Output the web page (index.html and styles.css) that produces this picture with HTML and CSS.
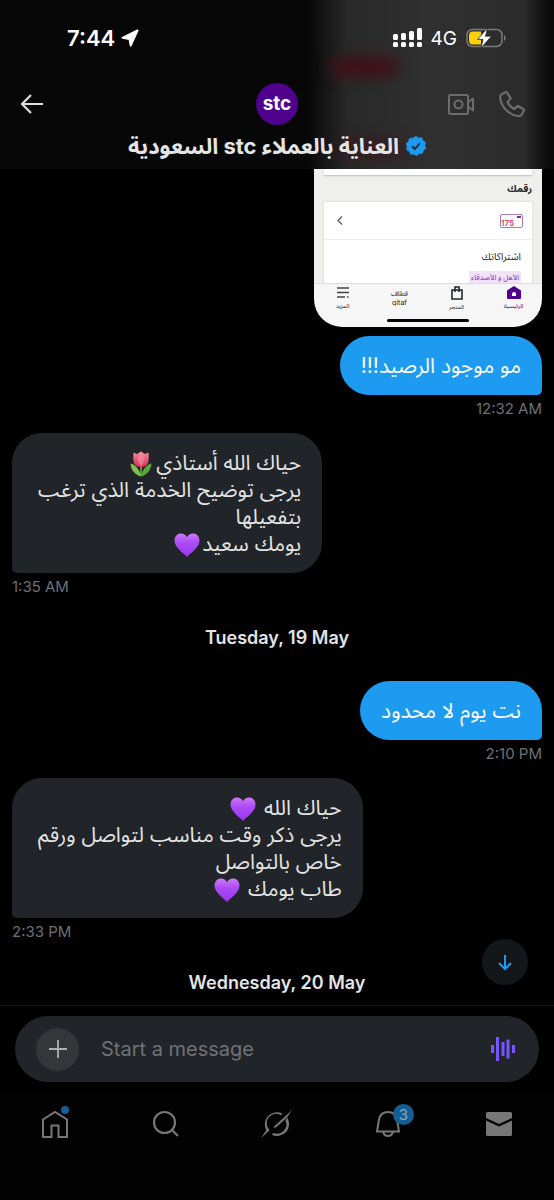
FILE: index.html
```html
<!DOCTYPE html>
<html lang="en">
<head>
<meta charset="utf-8">
<meta name="viewport" content="width=device-width, initial-scale=1">
<title>Messages</title>
<link rel="stylesheet" href="styles.css">
</head>
<body>
<svg class="defs" aria-hidden="true">
  <defs>
    <linearGradient id="heartFill" x1="0" y1="0" x2="0" y2="1"><stop offset="0" stop-color="#cf79f6"/><stop offset=".4" stop-color="#ac4cf5"/><stop offset="1" stop-color="#9a36ee"/></linearGradient>
    <linearGradient id="petal" x1="0" y1="0" x2="0" y2="1"><stop offset="0" stop-color="#f38aa0"/><stop offset="1" stop-color="#d92f55"/></linearGradient>
    <symbol id="heart" viewBox="0 0 26 26"><path fill="url(#heartFill)" d="M13 25C9 20.500.5 15.500.5 8.500.5 4.200 3.500 1.500 7 1.500c2.700 0 4.900 1.500 6 3.800 1.100-2.300 3.300-3.800 6-3.800 3.500 0 6.500 2.700 6.500 7C25.500 15.500 17 20.500 13 25z"/></symbol>
  </defs>
</svg>
<div class="app">
  <header class="top">
    <div class="glow" aria-hidden="true"><i class="spot spot-a"></i><i class="spot spot-b"></i></div>
    <div class="status">
      <div class="clock">7:44
        <svg width="18" height="18" viewBox="0 0 18 18" aria-hidden="true"><path fill="#fff" stroke="#fff" stroke-width="2" stroke-linejoin="round" d="M16.500 1.500 1.500 8.800l7 1.200 1.200 6.500z"/></svg>
      </div>
      <div class="signals">
        <svg width="29" height="20" viewBox="0 0 29 20" fill="#fff" aria-hidden="true"><rect x="0" y="6" width="5" height="6" rx="1.500"/><rect x="8" y="5" width="5" height="7" rx="1.500"/><rect x="16" y="3" width="5" height="9" rx="1.500"/><rect x="24" y="0" width="5" height="12" rx="1.500"/><rect x="0" y="14" width="5" height="5" rx="1.500"/><rect x="8" y="14" width="5" height="5" rx="1.500"/><rect x="16" y="14" width="5" height="5" rx="1.500"/><rect x="24" y="14" width="5" height="5" rx="1.500"/></svg>
        <span>4G</span>
        <svg width="40" height="20" viewBox="0 0 40 20" aria-hidden="true"><rect x="1" y="1.500" width="35" height="17" rx="5.500" fill="none" stroke="#7b7b7b" stroke-width="1.500"/><path d="M38 7c2 1 2 5 0 6z" fill="#7b7b7b"/><path d="M7 3.500h8v13H7a4 4 0 0 1-4-4v-5a4 4 0 0 1 4-4z" fill="#fbd10a"/><path d="M21.500 0 11.500 11.500h5.500L15 20 25.500 8.200h-6z" fill="#fff" stroke="#2b2b2b" stroke-width=".8" stroke-linejoin="round"/></svg>
      </div>
    </div>
    <div class="bar">
      <button class="plain back" aria-label="Back"><svg width="24" height="22" viewBox="0 0 24 22" fill="none" stroke="#e0e0e0" stroke-width="2.200"><path d="M23 11H2M11 2l-9 9 9 9"/></svg></button>
      <div class="avatar" role="img" aria-label="stc"><span>stc</span></div>
      <div class="calls">
        <button class="plain" aria-label="Video call"><svg width="28" height="24" viewBox="0 0 28 24" fill="none" stroke="#6c6c6c" stroke-width="2"><rect x="2" y="3" width="19" height="19" rx="1.500"/><circle cx="11.500" cy="12.500" r="4"/><path d="M21 10.500l5-4v12l-5-4" stroke-linejoin="round"/></svg></button>
        <button class="plain" aria-label="Call"><svg width="28" height="28" viewBox="0 0 28 28" fill="none" stroke="#6c6c6c" stroke-width="2.200" stroke-linejoin="round"><path d="M8.500 1.800 3.600 4.200C2.200 5 2 6.700 2.200 8.300 3.500 17 11 24.800 19.800 26c1.700.2 3.300-.2 4-1.600l2.400-4.700-6.400-4-3.600 3.400c-3-1.500-5.400-4-6.700-6.900l3.200-3.800z"/></svg></button>
      </div>
    </div>
    <h1 class="title" dir="rtl">
      <svg width="20" height="20" viewBox="0 0 20 20" role="img" aria-label="Verified"><path fill="#1d9bf0" d="M10 .3 12.600 1.900 15.700 1.800 17 4.600 19.500 6.500 18.900 9.500 19.800 12.500 17.400 14.500 16.300 17.400 13.200 17.700 10.600 19.600 7.800 18.200 4.700 18.200 3.300 15.400.7 13.700 1.100 10.600.2 7.600 2.500 5.500 3.500 2.500 6.600 2.200z" stroke="#1d9bf0" stroke-width=".6" stroke-linejoin="round"/><path d="M6 10.200l2.800 2.800L14 7.200" fill="none" stroke="#26313a" stroke-width="2"/></svg>
      <span>العناية بالعملاء stc السعودية</span>
    </h1>
  </header>

  <main class="thread">
    <figure class="shot" dir="rtl">
      <div class="shot-body">
        <div class="sheet-end"></div>
        <div class="shot-label">رقمك</div>
        <div class="sheet">
          <div class="sheet-row">
            <div class="sim"><b>175</b><i></i></div>
            <svg width="6" height="9" viewBox="0 0 6 9" fill="none" stroke="#555" stroke-width="1.200" aria-hidden="true"><path d="M5 .5 1 4.500l4 4"/></svg>
          </div>
          <div class="sheet-subs"><div>اشتراكاتك</div><span class="chip">الأهل و الأصدقاء</span></div>
        </div>
      </div>
      <div class="shot-tabs">
        <div class="tab on"><svg width="14" height="13" viewBox="0 0 14 13"><path fill="#4f008c" d="M7 0l7 4.500V12a1 1 0 0 1-1 1H1a1 1 0 0 1-1-1V4.500z"/><path fill="#fff" d="M5 10V8a2 2 0 0 1 4 0v2z"/></svg>الرئيسية</div>
        <div class="tab"><svg width="12" height="14" viewBox="0 0 12 14" fill="none" stroke="#25252e" stroke-width="1.600"><path d="M1 4h10v9H1zM4 6V1h4v5"/></svg>المتجر</div>
        <div class="tab brand"><span>قطاف</span><span>qitaf</span></div>
        <div class="tab"><svg width="12" height="13" viewBox="0 0 12 13" fill="none" stroke="#444" stroke-width="1.300"><path d="M0 2h12M0 6.500h12M0 11h8M10 11h1.500"/></svg>المزيد</div>
      </div>
      <div class="home-bar"></div>
    </figure>

    <div class="msg mine"><p class="bubble" dir="rtl">مو موجود الرصيد!!!</p><time>12:32 AM</time></div>

    <div class="msg theirs"><p class="bubble" dir="rtl">حياك الله أستاذي<svg class="emoji" viewBox="0 0 26 26" role="img" aria-label="Tulip"><path d="M12 12h2v13h-2z" fill="#4f9a35"/><path fill="#7fc04a" d="M13 25.500C11.500 17.500 7 13.500 2.500 12.500c.5 6.500 4 11 10.500 13z"/><path fill="#5da63c" d="M13 25.500c1.500-8 6-12 10.500-13-.5 6.500-4 11-10.500 13z"/><path fill="url(#petal)" d="M5.500 1.500 9 3l4-2.500L17 3l3.500-1.500C21 8 21.500 16 13 16S5 8 5.500 1.500z"/><path fill="#f590a6" d="M13 .5c4 4 4 10 0 15-4-5-4-11 0-15z" opacity=".65"/></svg><br>يرجى توضيح الخدمة الذي ترغب<br>بتفعيلها<br>يومك سعيد<svg class="emoji" role="img" aria-label="Purple heart"><use href="#heart"/></svg></p><time>1:35 AM</time></div>

    <h2 class="day">Tuesday, 19 May</h2>

    <div class="msg mine"><p class="bubble" dir="rtl">نت يوم لا محدود</p><time>2:10 PM</time></div>

    <div class="msg theirs"><p class="bubble" dir="rtl">حياك الله <svg class="emoji" role="img" aria-label="Purple heart"><use href="#heart"/></svg><br>يرجى ذكر وقت مناسب لتواصل ورقم<br>خاص بالتواصل<br>طاب يومك <svg class="emoji" role="img" aria-label="Purple heart"><use href="#heart"/></svg></p><time>2:33 PM</time></div>

    <h2 class="day last">Wednesday, 20 May</h2>
    <button class="jump" aria-label="Scroll to latest"><svg width="14" height="17" viewBox="0 0 14 17" fill="none" stroke="#1d9bf0" stroke-width="2"><path d="M7 1v14M1 9l6 6 6-6"/></svg></button>
  </main>

  <form class="composer">
    <div class="field">
      <button type="button" class="plus" aria-label="Add attachment"><svg width="18" height="18" viewBox="0 0 18 18" stroke="#aeb0b2" stroke-width="1.800"><path d="M9 0v18M0 9h18"/></svg></button>
      <input type="text" placeholder="Start a message" aria-label="Start a message">
      <button type="button" class="plain" aria-label="Voice message"><svg width="24" height="24" viewBox="0 0 24 24" fill="#7856ff"><rect x="0" y="8" width="3" height="8"/><rect x="5" y="0" width="3" height="24"/><rect x="10.500" y="5" width="3" height="14"/><rect x="15.500" y="2.500" width="3" height="19"/><rect x="21" y="8" width="3" height="8"/></svg></button>
    </div>
  </form>

  <nav class="nav" aria-label="Main">
    <a href="#" aria-label="Home"><svg width="28" height="28" viewBox="0 0 28 28" fill="none" stroke="#777" stroke-width="2"><path d="M2 9.500 14 2l12 7.500V27h-8.500V15.500h-7V27H2z"/></svg><i class="dot"></i></a>
    <a href="#" aria-label="Search"><svg width="28" height="28" viewBox="0 0 28 28" fill="none" stroke="#777" stroke-width="2.200"><circle cx="12.500" cy="12.500" r="10.500"/><path d="M20 20l6 6"/></svg></a>
    <a href="#" aria-label="Grok"><svg width="32" height="30" viewBox="0 0 32 30"><path fill="#777" d="M21.500 4.700A12 12 0 0 0 6.200 22.500l2-2A9.300 9.300 0 0 1 19.800 6.200z"/><path fill="#777" d="M26.200 8.500a12 12 0 0 1-15.500 17.200l1.900-1.700A9.300 9.300 0 0 0 24.500 11.500z"/><path fill="#777" d="M12 18.500 31 1 26 8.500 15 18.500zM0 29l6.500-9.500 2 2z"/></svg></a>
    <a href="#" aria-label="Notifications, 3 new"><svg width="26" height="28" viewBox="0 0 26 28" fill="none" stroke="#777" stroke-width="2"><path d="M2 21.500 4 9.500C5 4.500 8.500 2 13 2s8 2.500 9 7.500l2 12zM8 21.500c.7 3 2.500 4.500 5 4.500s4.300-1.500 5-4.500"/></svg><span class="badge">3</span></a>
    <a href="#" aria-label="Messages"><svg width="26" height="24" viewBox="0 0 26 24" fill="#777"><path d="M1.500 0h23A1.500 1.500 0 0 1 26 1.500V6l-13 6L0 6V1.500A1.500 1.500 0 0 1 1.500 0z"/><path d="M0 8.500l13 6 13-6v14a1.500 1.500 0 0 1-1.500 1.500h-23A1.500 1.500 0 0 1 0 22.500z"/></svg></a>
  </nav>
</div>
</body>
</html>
```
FILE: styles.css
```css
* { box-sizing: border-box; }
body {
  margin: 0;
  background: #000;
  color: #e3e4e5;
  font-family: Inter, "Noto Sans Arabic", "DejaVu Sans", sans-serif;
}
.defs { position: absolute; width: 0; height: 0; }
button { border: 0; padding: 0; cursor: pointer; font: inherit; }
svg { display: block; flex: none; }
.plain { background: none; }
.app { min-height: 100vh; display: flex; flex-direction: column; }

.top { position: relative; padding: 24px 20px 9px; background: #070707; overflow: hidden; }
.top > * { position: relative; }
.top .glow {
  position: absolute;
  inset: -20px 0 -20px auto;
  width: 246px;
  background: linear-gradient(90deg, #070707, #292929 16%, #303030 50%, #2b2b2b 88%, #0a0a0a 98%);
}
.spot { position: absolute; width: 68px; height: 20px; border-radius: 10px; background: #401018; filter: blur(7px); }
.spot-a { left: 22px; top: 77px; }
.spot-b { left: 30px; top: 158px; opacity: .6; }
.status { display: flex; justify-content: space-between; align-items: center; height: 28px; padding: 0 28px 0 47px; }
.clock { display: flex; align-items: center; gap: 6px; color: #fff; font-size: 22px; font-weight: 600; }
.signals { display: flex; align-items: center; gap: 9px; color: #fff; font-size: 19px; }
.bar { display: grid; grid-template-columns: 1fr auto 1fr; align-items: center; margin-top: 31px; }
.back { justify-self: start; }
.avatar {
  width: 42px; height: 42px; border-radius: 50%;
  background: #4f008c; color: #fff;
  display: grid; place-items: center;
  font-size: 19px; font-weight: 700; line-height: 20px;
}
.calls { justify-self: end; display: flex; align-items: center; gap: 23px; padding-right: 8px; }
.title {
  display: flex; justify-content: center; align-items: center; gap: 7px;
  margin: 6px 0 0; height: 29px;
  font-size: 22px; font-weight: 700; line-height: 28px; white-space: nowrap;
}

.thread { position: relative; flex: 1; padding: 0 12px 10px; display: flex; flex-direction: column; }
.shot {
  align-self: flex-end; width: 228px; margin: 0 0 9px;
  border-radius: 0 0 28px 28px; overflow: hidden;
  background: #f6f6f6; color: #25252e;
}
.shot-body { background: #eff0ec; padding: 0 10px; }
.sheet-end { height: 6px; background: #fff; box-shadow: 0 1px 2px #bbb; }
.shot-label { height: 27px; line-height: 26px; font-size: 10px; font-weight: 700; }
.sheet { background: #fff; box-shadow: 0 0 2px #ccc; }
.sheet-row { display: flex; justify-content: space-between; align-items: center; height: 38px; padding: 0 9px 0 13px; border-bottom: 1px solid #eee; }
.sim { display: flex; justify-content: space-between; width: 23px; height: 14px; border: 1px solid #a77bb5; border-radius: 2px; direction: ltr; }
.sim b { color: #e0405c; font-size: 8px; line-height: 16px; font-weight: 600; }
.sim i { width: 4px; height: 2px; margin: 1px; background: #6a3a8c; }
.sheet-subs { height: 43px; padding: 5px 11px 0; font-size: 10px; line-height: 22px; overflow: hidden; }
.chip { display: block; width: fit-content; margin-top: 4px; padding: 0 2px; background: #f1e4f8; color: #a05ac8; font-size: 7px; line-height: 14px; font-weight: 600; }
.shot-tabs { display: grid; grid-template-columns: repeat(4, 1fr); border-top: 1px solid #ddd; padding-top: 2px; height: 35px; }
.tab { display: flex; flex-direction: column; align-items: center; gap: 2px; font-size: 6px; line-height: 10px; }
.tab.on { color: #4f008c; }
.tab.brand { gap: 0; padding-top: 3px; font-size: 7px; line-height: 9px; }
.home-bar { width: 82px; height: 3px; margin: 1px auto 5px; border-radius: 2px; background: #000; }

.msg { display: flex; flex-direction: column; margin-bottom: 14px; }
.mine { align-items: flex-end; }
.theirs { align-items: flex-start; }
.bubble { margin: 0; padding: 16px 21px; border-radius: 30px; font-size: 21px; line-height: 27px; max-width: 90%; }
.mine .bubble { background: #1d9bf0; color: #fff; border-bottom-right-radius: 5px; }
.theirs .bubble { padding-left: 26px; background: #212428; border-bottom-left-radius: 5px; }
.emoji { display: inline-block; width: 26px; height: 26px; margin: -4px 2px; vertical-align: -3px; }
time { margin-top: 4px; color: #6d7074; font-size: 15px; line-height: 20px; }
.day { margin: 15px 0 31px; text-align: center; font-size: 18px; line-height: 24px; font-weight: 600; }
.day.last { margin-bottom: 0; }
.jump {
  position: absolute; right: 26px; bottom: 20px;
  width: 46px; height: 46px; border-radius: 50%;
  background: #14171a; display: grid; place-items: center;
}

.composer { border-top: 1px solid #191a1b; padding: 10px 15px; }
.field { display: flex; align-items: center; gap: 22px; height: 66px; padding: 0 24px 0 21px; border-radius: 33px; background: #212428; }
.plus { width: 43px; height: 43px; border-radius: 50%; background: #33373a; display: grid; place-items: center; flex: none; }
.field input { flex: 1; min-width: 0; padding: 0; border: 0; outline: 0; background: none; color: #e3e4e5; font: 20px/28px Inter, sans-serif; }
.field input::placeholder { color: #6f7276; opacity: 1; }

.nav { display: grid; grid-template-columns: repeat(5, 1fr); background: #020202; padding: 17px 0 61px; }
.nav a { position: relative; display: grid; place-items: center; height: 30px; text-decoration: none; }
.dot { position: absolute; left: calc(50% + 6px); top: -3px; width: 8px; height: 8px; border-radius: 50%; background: #135f95; }
.badge {
  position: absolute; left: calc(50% + 5px); top: -5px;
  width: 21px; height: 21px; border-radius: 50%;
  background: #135f95; color: #8fa6b6; font-size: 15px; line-height: 21px; text-align: center;
}
```
